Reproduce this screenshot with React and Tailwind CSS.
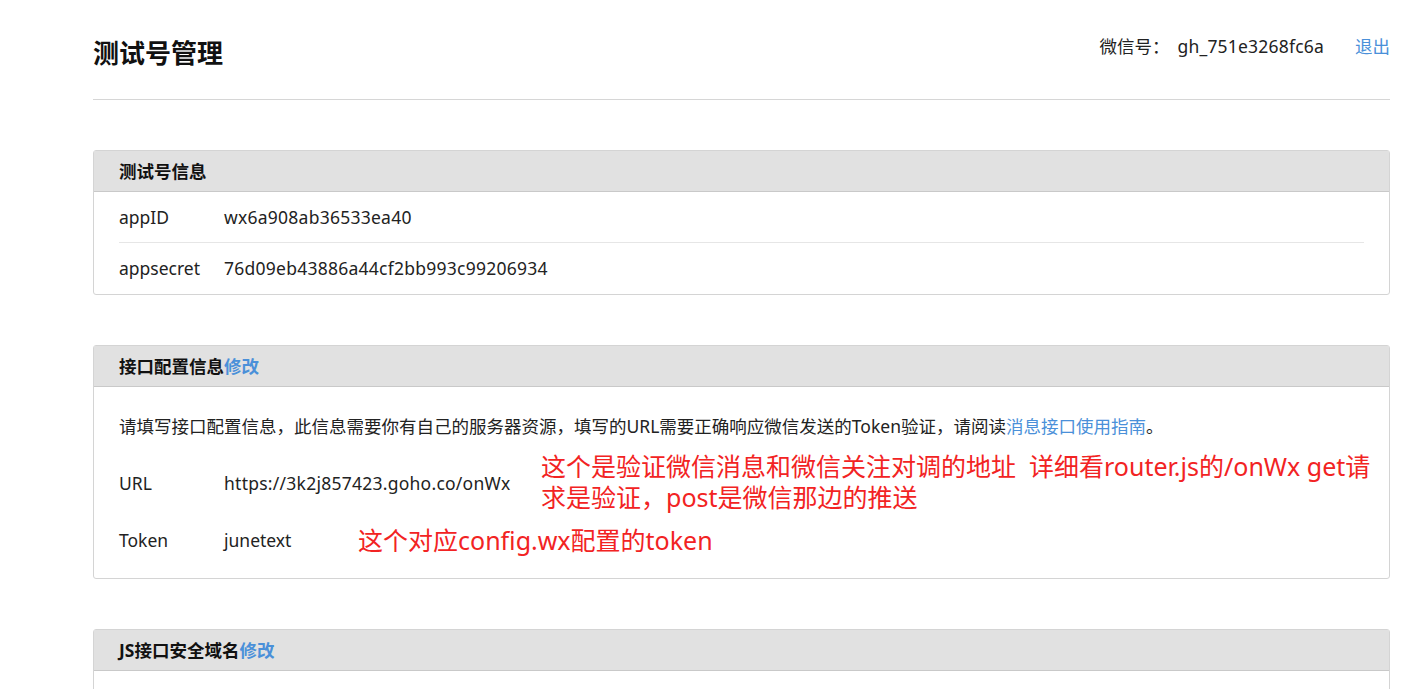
import React from 'react';

const font = { fontFamily: '"Noto Sans", "Noto Sans CJK SC", sans-serif' };

const Panel = ({ title, edit, children }) => (
    <div className="rounded-[3px] border border-[#d4d4d4] bg-white">
        <div className="flex h-[41px] items-center border-b border-[#c9c9c9] bg-[#e1e1e1] px-[25px] text-[17.5px] font-bold text-[#111]">
            {title}
            {edit && <a className="text-[#4a90d9]">修改</a>}
        </div>
        {children}
    </div>
);

export default function App() {
    return (
        <div className="min-h-screen bg-white pl-[93px] pr-[31px] text-[#222]" style={font}>
            {/* Top bar */}
            <div className="flex h-[100px] justify-between border-b border-[#d6d6d6]">
                <h1 className="pt-[35px] text-[26px] font-bold leading-[36px] text-[#111]">测试号管理</h1>
                <div className="flex pt-[34px] text-[17.5px] leading-[24px]">
                    <span>微信号：</span>
                    <span className="ml-[8px] tracking-[0.2px]">gh_751e3268fc6a</span>
                    <a className="ml-[31px] text-[#4a90d9]">退出</a>
                </div>
            </div>

            {/* Test account info */}
            <div className="mt-[50px]">
                <Panel title="测试号信息">
                    <div className="px-[25px] text-[17.5px]">
                        <div className="flex h-[51px] items-center border-b border-[#e6e6e6]">
                            <span className="w-[105px]">appID</span>
                            <span className="tracking-[0.25px]">wx6a908ab36533ea40</span>
                        </div>
                        <div className="flex h-[51px] items-center">
                            <span className="w-[105px]">appsecret</span>
                            <span className="tracking-[0.25px]">76d09eb43886a44cf2bb993c99206934</span>
                        </div>
                    </div>
                </Panel>
            </div>

            {/* Interface config */}
            <div className="mt-[50px]">
                <Panel title="接口配置信息" edit>
                    <div className="px-[25px] pt-[11px] pb-[9px] text-[17.5px]">
                        <div className="flex h-[57px] items-center">
                            <span>
                                请填写接口配置信息，此信息需要你有自己的服务器资源，填写的URL需要正确响应微信发送的Token验证，请阅读
                                <a className="text-[#4a90d9]">消息接口使用指南</a>。
                            </span>
                        </div>
                        <div className="relative flex h-[57px] items-center">
                            <span className="w-[105px]">URL</span>
                            <span className="tracking-[0.25px]">https://3k2j857423.goho.co/onWx</span>
                            <div className="absolute left-[422px] top-[-4px] whitespace-nowrap text-[25px] leading-[31px] text-[#f22323]">
                                这个是验证微信消息和微信关注对调的地址&nbsp;&nbsp;详细看router.js的/onWx get请
                                <br />
                                求是验证，post是微信那边的推送
                            </div>
                        </div>
                        <div className="relative flex h-[57px] items-center">
                            <span className="w-[105px]">Token</span>
                            <span>junetext</span>
                            <div className="absolute left-[239px] top-[13px] whitespace-nowrap text-[25px] leading-[31px] text-[#f22323]">
                                这个对应config.wx配置的token
                            </div>
                        </div>
                    </div>
                </Panel>
            </div>

            {/* JS domain */}
            <div className="mt-[50px]">
                <Panel title="JS接口安全域名" edit>
                    <div className="h-[60px]" />
                </Panel>
            </div>
        </div>
    );
}
